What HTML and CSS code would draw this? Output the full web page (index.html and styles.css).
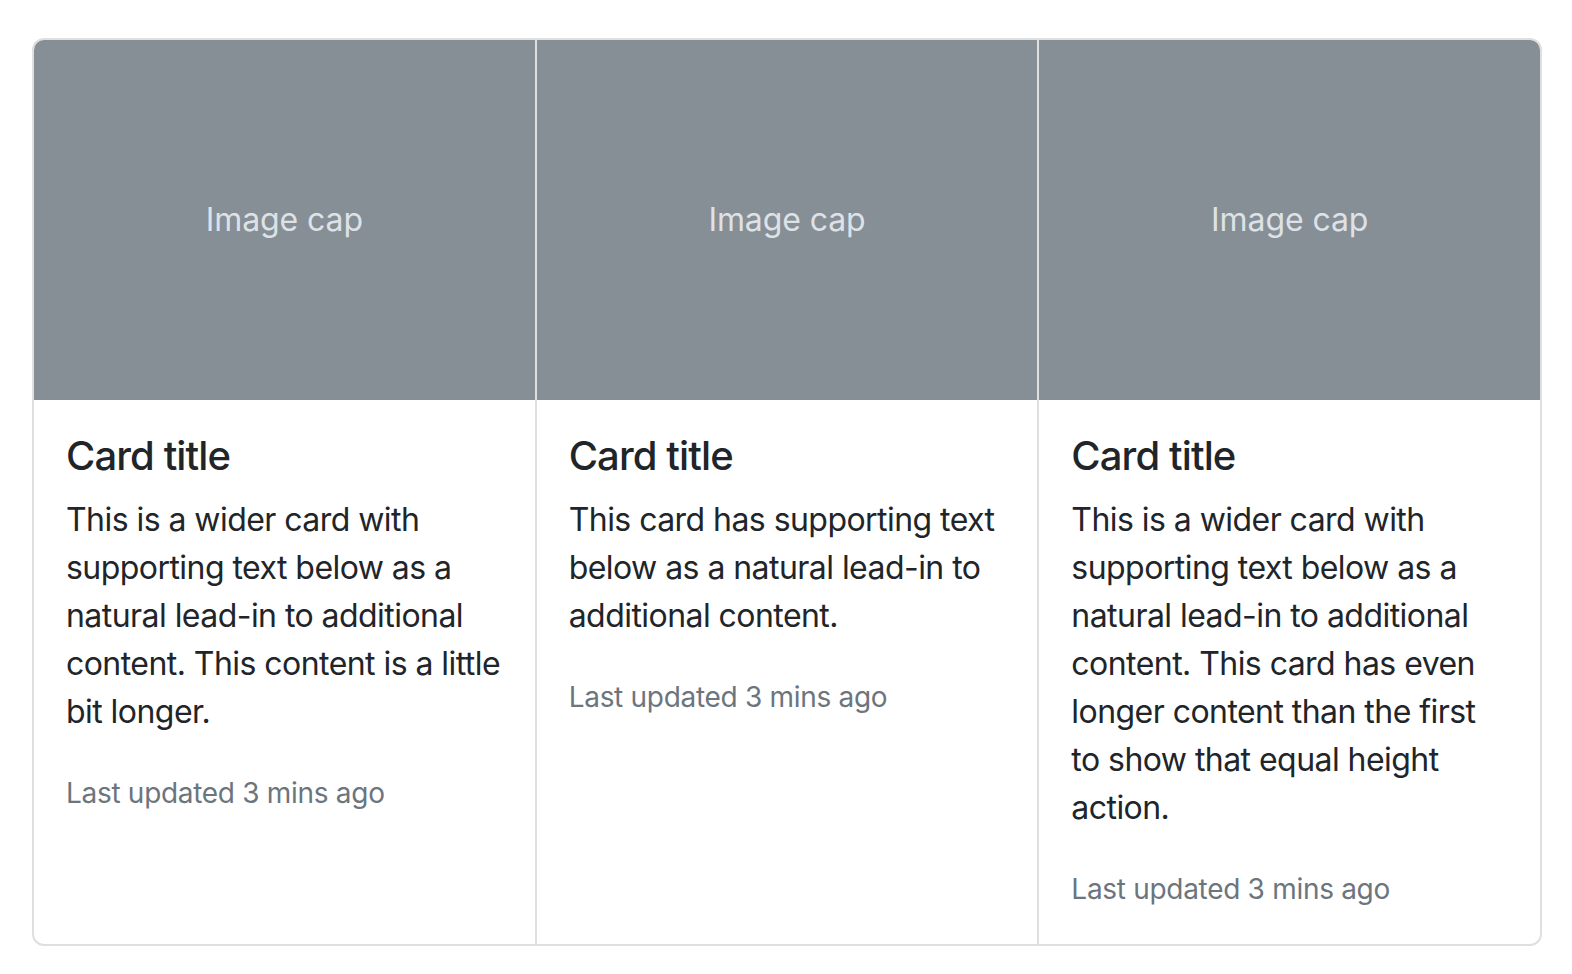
FILE: index.html
```html
<!DOCTYPE html>
<html lang="en">
<head>
<meta charset="utf-8">
<title>Card group</title>
<link rel="stylesheet" href="styles.css">
</head>
<body>
<div class="card-group">
  <div class="card">
    <div class="card-img"><span>Image cap</span></div>
    <div class="card-body">
      <h5 class="card-title">Card title</h5>
      <p class="card-text">This is a wider card with supporting text below as a natural lead-in to additional content. This content is a little bit longer.</p>
      <p class="card-text"><small class="muted">Last updated 3 mins ago</small></p>
    </div>
  </div>
  <div class="card">
    <div class="card-img"><span>Image cap</span></div>
    <div class="card-body">
      <h5 class="card-title">Card title</h5>
      <p class="card-text">This card has supporting text below as a natural lead-in to additional content.</p>
      <p class="card-text"><small class="muted">Last updated 3 mins ago</small></p>
    </div>
  </div>
  <div class="card">
    <div class="card-img"><span>Image cap</span></div>
    <div class="card-body">
      <h5 class="card-title">Card title</h5>
      <p class="card-text">This is a wider card with supporting text below as a natural lead-in to additional content. This card has even longer content than the first to show that equal height action.</p>
      <p class="card-text"><small class="muted">Last updated 3 mins ago</small></p>
    </div>
  </div>
</div>
</body>
</html>
```

FILE: styles.css
```css
* { box-sizing: border-box; }
html, body { margin: 0; padding: 0; background: #fff; }
body {
  font-family: Inter, "Noto Sans", sans-serif;
  font-size: 32px;
  line-height: 1.5;
  color: #212529;
  padding: 38px 30px 0 32px;
}
.card-group {
  display: flex;
}
.card {
  flex: 1 0 0%;
  min-width: 0;
  display: flex;
  flex-direction: column;
  background: #fff;
  border: 2px solid #dfdfdf;
  overflow: hidden;
}
.card + .card { border-left: 0; }
.card:first-child { border-radius: 12px 0 0 12px; }
.card:last-child { border-radius: 0 12px 12px 0; }
.card-img {
  height: 360px;
  background: #868e96;
  color: #dee2e6;
  display: flex;
  align-items: center;
  justify-content: center;
  font-size: 32px;
  letter-spacing: -0.1px;
}
.card-body { padding: 32px; flex: 1 1 auto; }
.card-title {
  margin: 0 0 16px;
  font-size: 40px;
  font-weight: 500;
  line-height: 1.2;
  letter-spacing: -0.9px;
}
.card-text { margin: 0 0 32px; letter-spacing: -0.55px; }
.card-text:last-child { margin-bottom: 0; }
.muted { color: #6c757d; font-size: 28px; letter-spacing: -0.3px; }
```
